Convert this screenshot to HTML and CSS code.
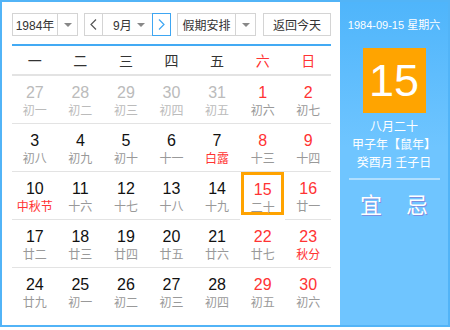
FILE: index.html
```html
<!DOCTYPE html>
<html>
<head>
<meta charset="utf-8">
<link rel="stylesheet" href="styles.css">
</head>
<body>
<div class="cal">
  <div class="main">
    <div class="toolbar">
      <div class="sel sel-year">
        <span class="sel-text">1984年</span>
        <span class="sel-arrow"><i class="tri"></i></span>
      </div>
      <div class="sel sel-month">
        <span class="nav prev"><svg width="7" height="11" viewBox="0 0 7 11"><path d="M6 0.5 L1 5.5 L6 10.5" fill="none" stroke="#555" stroke-width="1.2"/></svg></span>
        <span class="month-text"><span>9月</span><i class="tri"></i></span>
        <span class="nav next"><svg width="7" height="11" viewBox="0 0 7 11"><path d="M1 0.5 L6 5.5 L1 10.5" fill="none" stroke="#3ea6f2" stroke-width="1.2"/></svg></span>
      </div>
      <div class="sel sel-holiday">
        <span class="sel-text">假期安排</span>
        <span class="sel-arrow"><i class="tri"></i></span>
      </div>
      <div class="btn-today">返回今天</div>
    </div>
    <div class="weekhead">
      <span>一</span><span>二</span><span>三</span><span>四</span><span>五</span><span class="red">六</span><span class="red">日</span>
    </div>
    <div class="grid">
      <div class="cell other"><b>27</b><em>初一</em></div>
      <div class="cell other"><b>28</b><em>初二</em></div>
      <div class="cell other"><b>29</b><em>初三</em></div>
      <div class="cell other"><b>30</b><em>初四</em></div>
      <div class="cell other"><b>31</b><em>初五</em></div>
      <div class="cell wkend"><b>1</b><em>初六</em></div>
      <div class="cell wkend"><b>2</b><em>初七</em></div>

      <div class="cell"><b>3</b><em>初八</em></div>
      <div class="cell"><b>4</b><em>初九</em></div>
      <div class="cell"><b>5</b><em>初十</em></div>
      <div class="cell"><b>6</b><em>十一</em></div>
      <div class="cell"><b>7</b><em class="fest">白露</em></div>
      <div class="cell wkend"><b>8</b><em>十三</em></div>
      <div class="cell wkend"><b>9</b><em>十四</em></div>

      <div class="cell"><b>10</b><em class="fest">中秋节</em></div>
      <div class="cell"><b>11</b><em>十六</em></div>
      <div class="cell"><b>12</b><em>十七</em></div>
      <div class="cell"><b>13</b><em>十八</em></div>
      <div class="cell"><b>14</b><em>十九</em></div>
      <div class="cell wkend today"><b>15</b><em>二十</em></div>
      <div class="cell wkend"><b>16</b><em>廿一</em></div>

      <div class="cell"><b>17</b><em>廿二</em></div>
      <div class="cell"><b>18</b><em>廿三</em></div>
      <div class="cell"><b>19</b><em>廿四</em></div>
      <div class="cell"><b>20</b><em>廿五</em></div>
      <div class="cell"><b>21</b><em>廿六</em></div>
      <div class="cell wkend"><b>22</b><em>廿七</em></div>
      <div class="cell wkend"><b>23</b><em class="fest">秋分</em></div>

      <div class="cell last"><b>24</b><em>廿九</em></div>
      <div class="cell last"><b>25</b><em>初一</em></div>
      <div class="cell last"><b>26</b><em>初二</em></div>
      <div class="cell last"><b>27</b><em>初三</em></div>
      <div class="cell last"><b>28</b><em>初四</em></div>
      <div class="cell last wkend"><b>29</b><em>初五</em></div>
      <div class="cell last wkend"><b>30</b><em>初六</em></div>
    </div>
  </div>
  <div class="side">
    <div class="side-date">1984-09-15 星期六</div>
    <div class="bigday">15</div>
    <div class="lunar">
      <div>八月二十</div>
      <div>甲子年【鼠年】</div>
      <div>癸酉月 壬子日</div>
    </div>
    <div class="side-line"></div>
    <div class="yiji"><span>宜</span><span>忌</span></div>
  </div>
</div>
</body>
</html>
```

FILE: styles.css
```css
* { box-sizing: border-box; }
html, body { margin: 0; padding: 0; background: #fff; }
body {
  font-family: "Liberation Sans", Arial, "Noto Sans CJK SC", sans-serif;
  color: #333;
}
.cal {
  width: 450px;
  height: 327px;
  border: 2px solid #52b4f7;
  display: flex;
}
.main {
  width: 338px;
  padding: 11px 9px 0 10px;
  background: #fff;
}
.toolbar {
  display: flex;
  height: 23px;
  gap: 6px;
  font-size: 12px;
}
.sel {
  display: flex;
  border: 1px solid #d4d4d4;
  background: #fff;
  height: 23px;
}
.sel-year { width: 66px; }
.sel-text {
  flex: 1;
  display: flex;
  align-items: center;
  justify-content: center;
  color: #333;
}
.sel-arrow {
  width: 20px;
  border-left: 1px solid #d4d4d4;
  display: flex;
  align-items: center;
  justify-content: center;
}
.tri {
  display: block;
  width: 0;
  height: 0;
  border-left: 4px solid transparent;
  border-right: 4px solid transparent;
  border-top: 4px solid #888;
}
.sel-month { width: 87px; border: none; }
.nav {
  width: 19px;
  display: flex;
  align-items: center;
  justify-content: center;
  border: 1px solid #d4d4d4;
}
.nav.next { border-color: #3ea6f2; }
.month-text {
  flex: 1;
  display: flex;
  align-items: center;
  justify-content: space-between;
  padding: 0 7px 0 10px;
  border-top: 1px solid #d4d4d4;
  border-bottom: 1px solid #d4d4d4;
}
.sel-holiday { width: 79px; }
.btn-today {
  width: 68px;
  margin-left: 1px;
  border: 1px solid #d4d4d4;
  display: flex;
  align-items: center;
  justify-content: center;
  color: #333;
}
.weekhead {
  margin-top: 8px;
  border-top: 2px solid #43aaf4;
  border-bottom: 2px solid #e3e3e3;
  height: 32px;
  display: grid;
  grid-template-columns: repeat(7, 1fr);
  align-items: center;
  font-size: 14px;
  font-family: "Noto Sans CJK SC", sans-serif;
  color: #333;
}
.weekhead span { text-align: center; }
.weekhead .red { color: #f33; }
.grid {
  display: grid;
  grid-template-columns: repeat(7, 1fr);
  grid-auto-rows: 48px;
}
.cell {
  border-bottom: 1px solid #e3e3e3;
  display: flex;
  flex-direction: column;
  align-items: center;
  padding-top: 7px;
}
.cell.last { border-bottom: none; }
.cell b {
  font-weight: normal;
  font-size: 16px;
  line-height: 19px;
  color: #111;
}
.cell em {
  font-style: normal;
  font-size: 12px;
  line-height: 16px;
  color: #999;
  font-family: "Noto Sans CJK SC", sans-serif;
}
.cell.other b { color: #bbb; }
.cell.other em { color: #bbb; }
.cell.wkend b { color: #f33; }
.cell em.fest { color: #f33; }
.cell.today {
  border: 3px solid #ffa300;
  margin: 0 1px 5px 1px;
  padding-top: 5px;
}
.side {
  flex: 1;
  background: linear-gradient(#4fb5fb, #6fc5ff 45%, #6fc5ff);
  color: #fff;
  display: flex;
  flex-direction: column;
  align-items: center;
  padding-top: 16px;
}
.side-date {
  font-size: 11px;
  line-height: 14px;
}
.bigday {
  margin-top: 16px;
  width: 63px;
  height: 65px;
  background: #ffa400;
  font-size: 45px;
  line-height: 65px;
  text-align: center;
  color: #fff;
}
.lunar {
  margin-top: 4px;
  font-size: 12px;
  line-height: 18px;
  text-align: center;
  font-family: "Noto Sans CJK SC", sans-serif;
}
.side-line {
  margin-top: 7px;
  width: 91px;
  height: 2px;
  background: rgba(255,255,255,0.45);
}
.yiji {
  margin-top: 10px;
  width: 100%;
  display: flex;
  justify-content: center;
  gap: 24px;
  font-size: 22px;
  line-height: 26px;
  font-family: "Noto Sans CJK SC", sans-serif;
  text-shadow: 1px 1px 0 #7b8fe0;
}
```
